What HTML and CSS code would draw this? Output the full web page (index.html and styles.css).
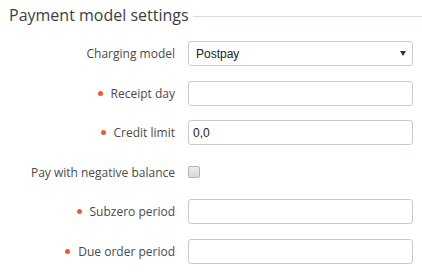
FILE: index.html
```html
<!DOCTYPE html>
<html>
<head>
<meta charset="utf-8">
<link rel="stylesheet" href="styles.css">
</head>
<body>
<div class="panel">
  <div class="legend">
    <span class="legend-title">Payment model settings</span>
    <span class="legend-line"></span>
  </div>
  <div class="form">
    <div class="row">
      <label class="label">Charging model</label>
      <div class="control select">
        <span class="select-value">Postpay</span>
        <svg class="caret" width="6" height="5" viewBox="0 0 6 5"><path d="M0 0H6L3 5Z" fill="#333"/></svg>
      </div>
    </div>
    <div class="row">
      <label class="label required">Receipt day</label>
      <div class="control input"></div>
    </div>
    <div class="row">
      <label class="label required">Credit limit</label>
      <div class="control input">0,0</div>
    </div>
    <div class="row">
      <label class="label">Pay with negative balance</label>
      <div class="check-wrap"><span class="checkbox"></span></div>
    </div>
    <div class="row">
      <label class="label required">Subzero period</label>
      <div class="control input"></div>
    </div>
    <div class="row">
      <label class="label required">Due order period</label>
      <div class="control input"></div>
    </div>
  </div>
</div>
</body>
</html>
```
FILE: styles.css
```css
html, body {
  margin: 0;
  padding: 0;
  background: #ffffff;
}
.panel {
  width: 422px;
  height: 280px;
  font-family: "Open Sans", sans-serif;
}
.legend {
  display: flex;
  align-items: center;
  padding: 3px 0 0 9px;
  height: 24px;
}
.legend-title {
  font-size: 16px;
  line-height: 24px;
  color: #3d3d3d;
  white-space: nowrap;
}
.legend-line {
  flex: 1;
  height: 1px;
  background: #d9dde2;
  margin-left: 4px;
  margin-top: 2px;
}
.form {
  margin-top: 14px;
  display: flex;
  flex-direction: column;
  gap: 14.6px;
}
.row {
  display: flex;
  align-items: center;
  height: 25px;
}
.label {
  width: 175px;
  flex: none;
  text-align: right;
  font-size: 12px;
  color: #4a4a4a;
  display: flex;
  align-items: center;
  justify-content: flex-end;
  white-space: nowrap;
}
.label.required::before {
  content: "";
  width: 5px;
  height: 5px;
  border-radius: 50%;
  background: #f15a2b;
  margin-right: 8px;
}
.control {
  box-sizing: border-box;
  margin-left: 13px;
  width: 225px;
  height: 25px;
  border: 1px solid #c6cbd2;
  border-radius: 3px;
  background: #fff;
  font-family: "Liberation Sans", Arial, sans-serif;
  font-size: 12px;
  color: #222;
  display: flex;
  align-items: center;
}
.input {
  padding-left: 4px;
}
.select {
  padding: 0 6px 0 7px;
  justify-content: space-between;
}
.caret {
  display: block;
}
.check-wrap {
  margin-left: 13px;
  display: flex;
  align-items: center;
}
.checkbox {
  box-sizing: border-box;
  width: 12px;
  height: 12px;
  border: 1px solid #b3b3b3;
  border-radius: 2px;
  background: linear-gradient(#ececec, #d9d9d9);
}
```
